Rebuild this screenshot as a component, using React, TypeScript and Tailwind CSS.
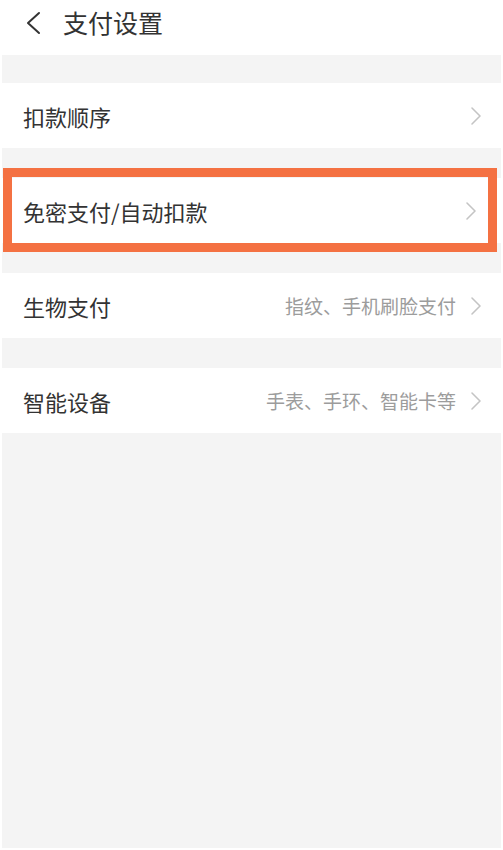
import React from "react";

const font = { fontFamily: '"Noto Sans CJK SC", "Noto Sans", sans-serif' };

function Chevron() {
  return (
    <svg width="12" height="20" viewBox="0 0 12 20" fill="none" className="shrink-0">
      <polyline points="2,2 10,10 2,18" stroke="#c4c4c4" strokeWidth="1.6" strokeLinecap="round" strokeLinejoin="round" />
    </svg>
  );
}

function Row({ title, sub, highlight }: { title: string; sub?: string; highlight?: boolean }) {
  return (
    <div className="relative h-[65px] bg-white flex items-center pl-[21px] pr-[19px]">
      <span className="text-[22px] text-[#333333] leading-none">{title}</span>
      <div className="flex-1" />
      {sub && <span className="text-[19px] text-[#9c9c9c] leading-none mr-[14px]">{sub}</span>}
      <div className={highlight ? "mr-[5px]" : ""}>
        <Chevron />
      </div>
      {highlight && (
        <div className="absolute top-[-10px] bottom-[-9px] left-[1px] right-[4px] border-[9px] border-[#f47142]" />
      )}
    </div>
  );
}

export default function App() {
  return (
    <div className="w-[503px] h-[850px] bg-white" style={font}>
      <div className="h-[55px] flex items-center pb-[10px] pl-[24px]">
        <svg width="18" height="24" viewBox="0 0 18 24" fill="none">
          <polyline points="15,2 4,12 15,22" stroke="#333333" strokeWidth="2" strokeLinecap="round" strokeLinejoin="round" />
        </svg>
        <span className="ml-[21px] text-[25px] text-[#333333] leading-none">支付设置</span>
      </div>
      <div className="mx-[2px] h-[793px] bg-[#f4f4f4] pt-[28px] flex flex-col gap-[30px]">
        <Row title="扣款顺序" />
        <Row title="免密支付/自动扣款" highlight />
        <Row title="生物支付" sub="指纹、手机刷脸支付" />
        <Row title="智能设备" sub="手表、手环、智能卡等" />
      </div>
    </div>
  );
}
